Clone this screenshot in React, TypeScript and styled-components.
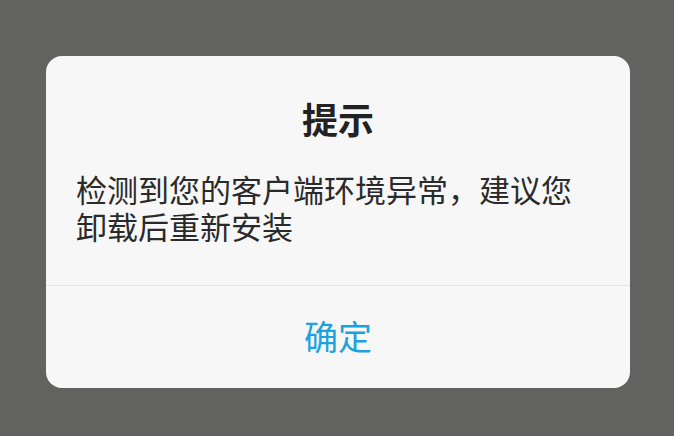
import React from 'react';
import styled, { createGlobalStyle } from 'styled-components';

const GlobalStyle = createGlobalStyle`
  html, body {
    margin: 0;
    padding: 0;
    background: #626361;
  }
  body {
    font-family: "Noto Sans CJK SC", "Noto Sans", sans-serif;
  }
`;

const Overlay = styled.div`
  width: 674px;
  height: 436px;
  background: #626361;
  padding-top: 56px;
  padding-left: 46px;
  box-sizing: border-box;
`;

const Dialog = styled.div`
  width: 584px;
  background: #f7f7f7;
  border-radius: 16px;
  overflow: hidden;
`;

const Title = styled.div`
  padding-top: 42px;
  font-size: 36px;
  line-height: 40px;
  font-weight: 700;
  color: #222;
  text-align: center;
`;

const Message = styled.div`
  padding: 32px 30px 41px 30px;
  font-size: 31px;
  line-height: 37px;
  color: #2a2a2a;
`;

const Divider = styled.div`
  height: 1px;
  background: #e2e2e2;
`;

const Action = styled.button`
  display: block;
  width: 100%;
  height: 102px;
  border: none;
  background: transparent;
  font-family: inherit;
  font-size: 34px;
  color: #1ca2dd;
  padding: 0 0 4px;
`;

function App() {
  return (
    <>
      <GlobalStyle />
      <Overlay>
        <Dialog>
          <Title>提示</Title>
          <Message>检测到您的客户端环境异常，建议您卸载后重新安装</Message>
          <Divider />
          <Action>确定</Action>
        </Dialog>
      </Overlay>
    </>
  );
}

export default App;
